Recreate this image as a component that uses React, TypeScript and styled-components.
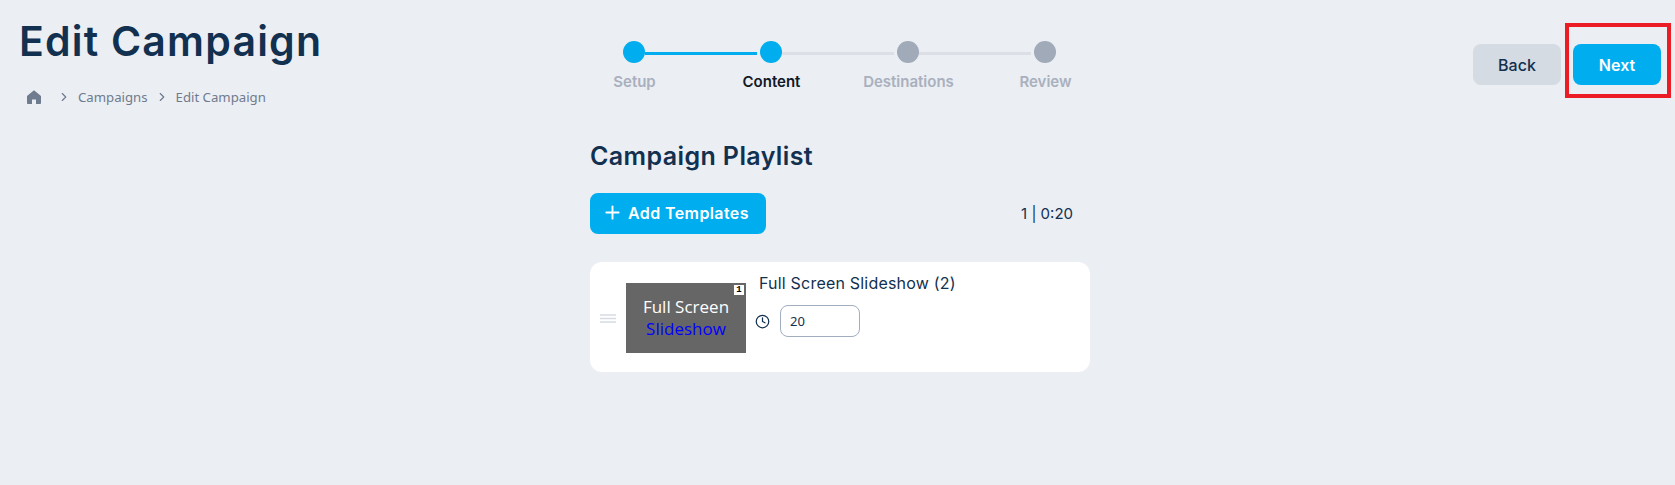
import { ChevronRight, Clock, Plus } from 'lucide-react'
import styled, { createGlobalStyle } from 'styled-components'

const steps = [
	{ label: 'Setup', done: true, current: false },
	{ label: 'Content', done: true, current: true },
	{ label: 'Destinations', done: false, current: false },
	{ label: 'Review', done: false, current: false },
]

const App = () => {
	return (
		<>
			<GlobalStyle />
			<Page>
				<Header>
					<TitleBlock>
						<Title>Edit Campaign</Title>
						<Breadcrumbs>
							<svg width="16" height="16" viewBox="0 0 16 16" fill="#6f7b8e">
								<path d="M8 1.2 1 7v7.2c0 .5.4.8.8.8H6v-4.6h4V15h4.2c.4 0 .8-.3.8-.8V7z" />
							</svg>
							<CrumbChevron $first><ChevronRight size={14} strokeWidth={2} /></CrumbChevron>
							<span>Campaigns</span>
							<CrumbChevron><ChevronRight size={14} strokeWidth={2} /></CrumbChevron>
							<span>Edit Campaign</span>
						</Breadcrumbs>
					</TitleBlock>
					<Stepper>
						{steps.map((step, i) => (
							<Step key={step.label}>
								<Track>
									<Line $hidden={i === 0} $active={step.done} $side="left" />
									<Dot $active={step.done} />
									<Line $hidden={i === steps.length - 1} $active={step.done && !step.current} $side="right" />
								</Track>
								<StepLabel $current={step.current}>{step.label}</StepLabel>
							</Step>
						))}
					</Stepper>
					<Actions>
						<BackButton type="button">Back</BackButton>
						<NextButton type="button">Next</NextButton>
						<Highlight />
					</Actions>
				</Header>
				<Main>
					<SectionTitle>Campaign Playlist</SectionTitle>
					<Toolbar>
						<AddButton type="button"><Plus size={21} strokeWidth={2.2} />Add Templates</AddButton>
						<Totals>1 | 0:20</Totals>
					</Toolbar>
					<Card>
						<Grip>
							<svg width="16" height="9" viewBox="0 0 16 9" stroke="#d5dbe3" strokeWidth="1.4">
								<path d="M0 1h16M0 4.5h16M0 8h16" />
							</svg>
						</Grip>
						<Thumb>
							<ThumbBadge>1</ThumbBadge>
							<ThumbLine>Full Screen</ThumbLine>
							<ThumbLine $blue>Slideshow</ThumbLine>
						</Thumb>
						<Details>
							<ItemName>Full Screen Slideshow (2)</ItemName>
							<DurationRow>
								<Clock size={15} strokeWidth={2} color="#12304f" />
								<DurationInput defaultValue="20" />
							</DurationRow>
						</Details>
					</Card>
				</Main>
			</Page>
		</>
	)
}

export default App

const GlobalStyle = createGlobalStyle`
	html, body {
		margin: 0;
		padding: 0;
		background: #ebeef3;
	}
	body {
		font-family: "Inter", "Liberation Sans", sans-serif;
		color: #12304f;
	}
`;

const Page = styled.div`
	width: 1675px;
	height: 485px;
	overflow: hidden;
	background: #ebeef3;
`;

const Header = styled.header`
	display: grid;
	grid-template-columns: 564px 548px 1fr;
	height: 140px;
`;

const TitleBlock = styled.div`
	padding: 17px 0 0 19px;
`;

const Title = styled.h1`
	margin: 0;
	font-size: 41px;
	line-height: 48px;
	font-weight: 600;
	letter-spacing: 1.2px;
	color: #12304f;
`;

const Breadcrumbs = styled.nav`
	display: flex;
	align-items: center;
	margin: 22px 0 0 7px;
	height: 20px;
	font-family: "Noto Sans", sans-serif;
	font-size: 13.2px;
	color: #6f7b8e;
`;

const CrumbChevron = styled.span<{ $first?: boolean }>`
	display: flex;
	margin: ${(p) => (p.$first ? '0 7px 0 15px' : '0 7px')};
	color: #6f7b8e;
`;

const Stepper = styled.div`
	display: grid;
	grid-template-columns: repeat(4, 137px);
	padding-top: 41px;
	align-content: start;
`;

const Step = styled.div`
	display: flex;
	flex-direction: column;
	align-items: center;
`;

const Track = styled.div`
	display: flex;
	align-items: center;
	width: 100%;
	height: 22px;
`;

const Line = styled.span<{ $hidden?: boolean; $active?: boolean; $side: 'left' | 'right' }>`
	flex: 1;
	height: 3px;
	margin: ${(p) => (p.$side === 'left' ? '2px 3px 0 0' : '2px 0 0 0')};
	visibility: ${(p) => (p.$hidden ? 'hidden' : 'visible')};
	background: ${(p) => (p.$active ? '#00aeef' : '#dcdfe5')};
`;

const Dot = styled.span<{ $active?: boolean }>`
	flex: none;
	width: 22px;
	height: 22px;
	border-radius: 50%;
	background: ${(p) => (p.$active ? '#00aeef' : '#a0aab8')};
`;

const StepLabel = styled.span<{ $current?: boolean }>`
	margin-top: 9px;
	padding-left: 4px;
	font-size: 15px;
	line-height: 20px;
	font-weight: 600;
	color: ${(p) => (p.$current ? '#111827' : '#a9b0bd')};
`;

const Actions = styled.div`
	position: relative;
	display: flex;
	justify-content: flex-end;
	gap: 12px;
	padding: 44px 14px 0 0;
	align-items: flex-start;
`;

const BackButton = styled.button`
	width: 88px;
	height: 41px;
	border: 0;
	border-radius: 8px;
	background: #d5dbe3;
	color: #12304f;
	font: 500 16px "Inter", sans-serif;
`;

const NextButton = styled(BackButton)`
	background: #00aeef;
	color: #fff;
	font-weight: 600;
`;

const Highlight = styled.div`
	position: absolute;
	top: 23px;
	right: 4px;
	width: 106px;
	height: 75px;
	box-sizing: border-box;
	border: 4px solid #ec1c24;
`;

const Main = styled.main`
	width: 500px;
	margin-left: 590px;
`;

const SectionTitle = styled.h2`
	margin: 0;
	font-size: 25px;
	line-height: 32px;
	font-weight: 600;
	letter-spacing: 0.4px;
	color: #12304f;
`;

const Toolbar = styled.div`
	display: flex;
	align-items: center;
	justify-content: space-between;
	margin-top: 21px;
	padding-right: 17px;
`;

const AddButton = styled.button`
	display: flex;
	align-items: center;
	gap: 5px;
	width: 176px;
	height: 41px;
	padding: 0 0 2px 12px;
	border: 0;
	border-radius: 8px;
	background: #00aeef;
	color: #fff;
	font: 600 16px "Inter", sans-serif;
	letter-spacing: 0.4px;
`;

const Totals = styled.span`
	font-size: 15px;
	color: #12304f;
`;

const Card = styled.section`
	display: flex;
	align-items: flex-start;
	height: 110px;
	margin-top: 28px;
	padding-top: 21px;
	box-sizing: border-box;
	border-radius: 12px;
	background: #fff;
`;

const Grip = styled.div`
	display: flex;
	align-items: center;
	height: 70px;
	margin: 0 10px 0 10px;
`;

const Thumb = styled.div`
	position: relative;
	display: flex;
	flex-direction: column;
	align-items: center;
	justify-content: center;
	width: 120px;
	height: 70px;
	box-sizing: border-box;
	background: #666;
	font-family: "Open Sans", sans-serif;
	font-size: 17px;
	line-height: 22px;
`;

const ThumbBadge = styled.span`
	position: absolute;
	top: 2px;
	right: 2px;
	width: 10px;
	height: 10px;
	background: #fff;
	color: #000;
	font: 700 9px/10px "Liberation Mono", monospace;
	text-align: center;
`;

const ThumbLine = styled.span<{ $blue?: boolean }>`
	color: ${(p) => (p.$blue ? '#0000ff' : '#fff')};
`;

const Details = styled.div`
	margin: -11px 0 0 9px;
`;

const ItemName = styled.div`
	padding-left: 4px;
	font-size: 16px;
	line-height: 22px;
	letter-spacing: 0.2px;
	color: #12304f;
`;

const DurationRow = styled.div`
	display: flex;
	align-items: center;
	gap: 10px;
	margin-top: 11px;
`;

const DurationInput = styled.input`
	width: 80px;
	height: 32px;
	padding: 0 9px;
	box-sizing: border-box;
	border: 1px solid #a0aec0;
	border-radius: 8px;
	background: #fff;
	color: #12304f;
	font: 400 13px "Noto Sans", sans-serif;
	outline: none;
`;
